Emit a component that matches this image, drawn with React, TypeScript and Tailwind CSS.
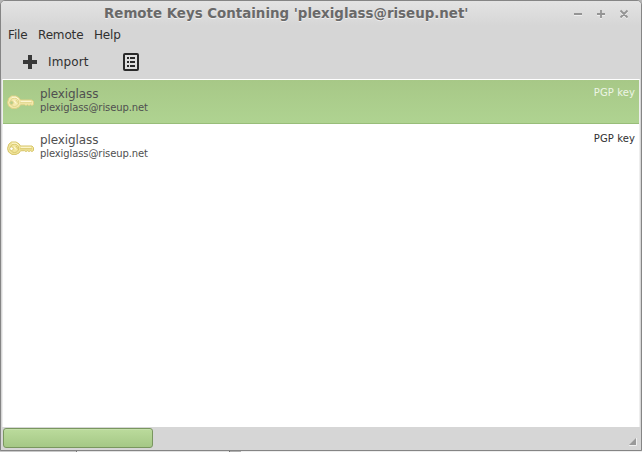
import React from 'react';

function KeyIcon({ selected = false }: { selected?: boolean }) {
  const edge = selected ? '#ddd184' : '#d6c468';
  const fill = selected ? '#f3e9ae' : '#f1e59c';
  return (
    <svg width="28" height="16" viewBox="0 0 28 16" className="block">
      <path
        d="M4.500 2h4.500l3 1.800 1.500 2.200h11.500l1.500 1.500v3l-1.500 1-1.500-.8-1.500.8-1.500-.8-1.500.8-1.500-.8-4 .1-1.500 2.200-3 1.400h-4L1.500 12 .5 8.500l1.300-4.300z"
        fill={fill}
        stroke={edge}
        strokeWidth="1"
        strokeLinejoin="round"
      />
      <circle cx="7.500" cy="8.300" r="4.200" fill="none" stroke={edge} strokeWidth=".9" />
      <circle cx="4.500" cy="8.700" r="1.800" fill={selected ? '#b5cd8b' : '#ffffff'} stroke={edge} strokeWidth=".8" />
      <path d="M13 8.800h12M9 6l3 4" stroke={edge} strokeWidth=".9" />
      <path d="M5 3.200h4l2.500 2M14 7.300h10M7 6.500l2 3" fill="none" stroke="#fffbe0" strokeWidth=".9" />
    </svg>
  );
}

function KeyRow({ selected = false }: { selected?: boolean }) {
  return (
    <div
      className={
        selected
          ? 'flex h-11 border-b border-[#98bd79] bg-linear-to-b from-[#a7c887] to-[#afd391]'
          : 'mt-0.5 flex h-11 bg-white'
      }
    >
      <div className="w-[37px] pt-[14px] pl-1">
        <KeyIcon selected={selected} />
      </div>
      <div className="flex-1 pt-[7px] text-[#505050]">
        <div className="text-[12px] leading-[15px] tracking-[-0.1px]">plexiglass</div>
        <div className="text-[10px] leading-[12px] tracking-[-0.1px]">plexiglass@riseup.net</div>
      </div>
      <div
        className={`pt-1.5 pr-1 text-[10px] leading-[13px] tracking-[0.1px] ${selected ? 'text-[#edf5e5]' : 'text-[#303030]'}`}
      >
        PGP key
      </div>
    </div>
  );
}

function TitleBar() {
  return (
    <div className="flex h-[25px] items-start bg-linear-to-b from-[#e3e3e3] to-[#d6d6d6]">
      <div className="flex-1 pt-[5px] pl-[103px] text-[13.4px] leading-4 font-bold whitespace-nowrap text-[#696969] [text-shadow:0_1px_0_#eeeeee]">
        Remote Keys Containing 'plexiglass@riseup.net'
      </div>
      <svg width="66" height="24" viewBox="0 0 66 24" className="mr-1 block" fill="none" strokeWidth="1.800">
        <g stroke="#efefef" transform="translate(0 1)">
          <path d="M3 13h8M26 13h8M30 9v8M49.500 9.500l7 7M56.500 9.500l-7 7" />
        </g>
        <path d="M3 13h8M26 13h8M30 9v8M49.500 9.500l7 7M56.500 9.500l-7 7" stroke="#949494" />
      </svg>
    </div>
  );
}

export default function App() {
  return (
    <div className="h-[452px] w-[642px] overflow-hidden bg-[#b5b5b5] font-['DejaVu_Sans',sans-serif] text-[#303030]">
      <div className="flex h-[451px] flex-col overflow-hidden rounded-t-[5px] border border-[#858585] bg-[#d6d6d6] shadow-[inset_0_1px_0_#f5f5f5]">
        <TitleBar />
        <div className="flex h-[18px] gap-[10.5px] pt-px pl-[7px] text-[12px] leading-[17px] tracking-[-0.15px]">
          <span>File</span>
          <span>Remote</span>
          <span>Help</span>
        </div>
        <div className="flex h-[35px] pt-[8px] pl-[22px]">
          <svg width="14" height="20" viewBox="0 0 14 20" className="block">
            <path d="M5 3h4v5h5v4H9v5H5v-5H0V8h5z" fill="#393939" />
          </svg>
          <span className="ml-[11px] w-[75px] pt-px text-[12px] leading-[19px] tracking-[0.15px]">Import</span>
          <svg width="16" height="18" viewBox="0 0 16 18" className="mt-px block">
            <rect x="1" y="1" width="14" height="16" rx="1" fill="#dedede" stroke="#292929" strokeWidth="2" />
            <path
              d="M4 4h2v2H4zM7 4h5v2H7zM4 8h2v2H4zM7 8h5v2H7zM4 12h2v2H4zM7 12h5v2H7z"
              fill="#292929"
            />
          </svg>
        </div>
        <div className="mx-px h-[348px] border-x border-t border-x-[#eeeeee] border-t-white bg-white">
          <KeyRow selected />
          <KeyRow />
        </div>
        <div className="flex h-[23px] items-start justify-between pl-0.5">
          <div className="mt-px h-5 w-[150px] rounded-[3px] border border-[#79965f] bg-linear-to-b from-[#bbdb9c] to-[#a5c886] shadow-[inset_0_1px_0_#c5dfab]" />
          <svg width="8" height="8" viewBox="0 0 8 8" className="mt-[11px] mr-[4px] block">
            <path d="M7 0v7H0z" fill="#999999" />
            <path d="M7.500 0v7.500H0" fill="none" stroke="#eeeeee" />
          </svg>
        </div>
      </div>
      <div className="flex h-px bg-[#eeeeee]">
        <div className="w-[76px] bg-[#c8c8c8]" />
        <div className="w-px bg-[#777777]" />
        <div className="w-[152px] bg-[#e2e2e2]" />
        <div className="w-px bg-[#707070]" />
        <div className="w-[11px] bg-[#b0b0b0]" />
      </div>
    </div>
  );
}
